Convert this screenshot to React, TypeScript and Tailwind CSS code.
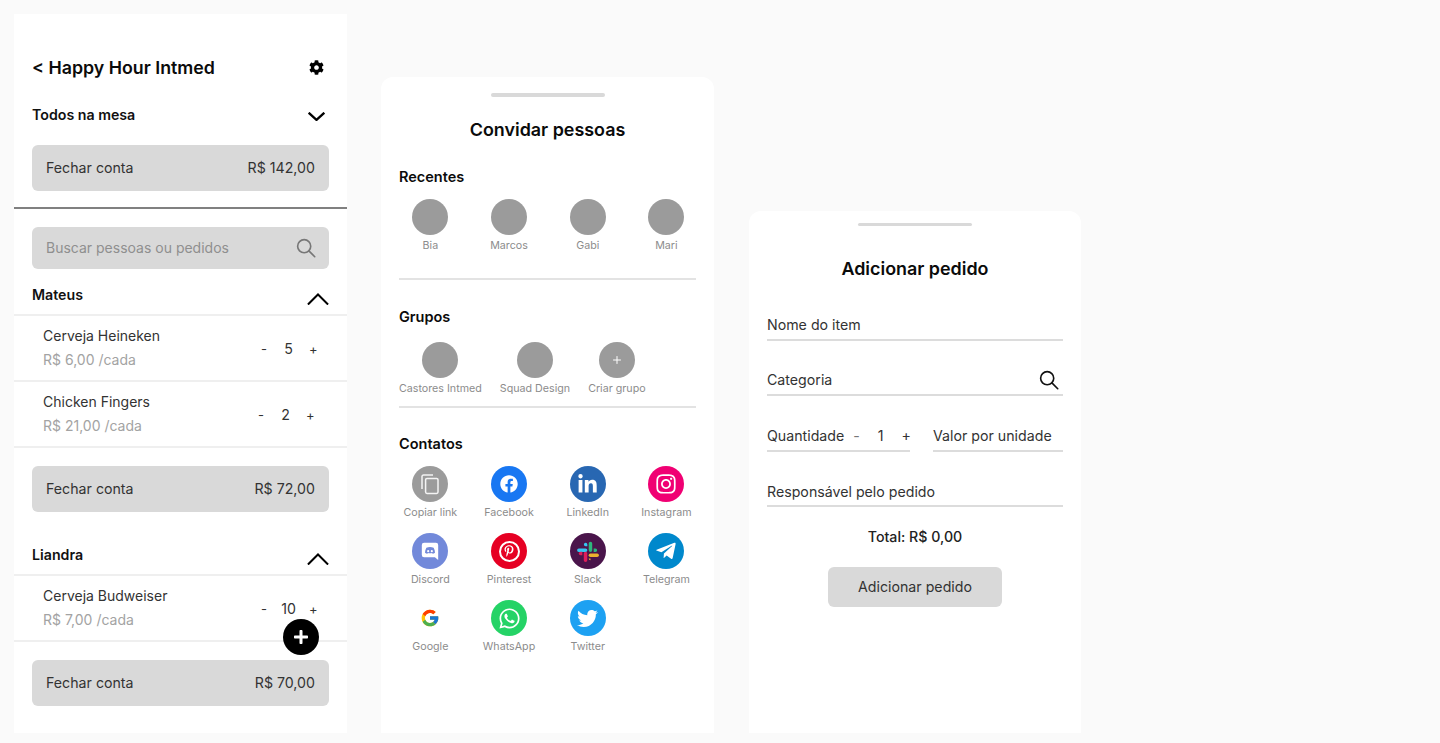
import { ReactNode } from 'react';
import {
  FaFacebook,
  FaLinkedinIn,
  FaInstagram,
  FaPinterestP,
  FaTelegramPlane,
  FaWhatsapp,
  FaTwitter,
  FaPlus,
  FaCog,
} from 'react-icons/fa';
import { FcGoogle } from 'react-icons/fc';
import { Plus } from 'lucide-react';

function SearchIcon({ className }: { className: string }) {
  return (
    <svg viewBox="0 0 22 22" fill="none" stroke="currentColor" strokeWidth="1.8" strokeLinecap="round" className={className}>
      <circle cx="9" cy="9" r="7.2" />
      <path d="M14.2 14.2 20.6 20.6" />
    </svg>
  );
}

function Chevron({ up, wide }: { up?: boolean; wide?: boolean }) {
  return (
    <svg
      viewBox="0 0 24 12"
      fill="none"
      stroke="black"
      strokeWidth={wide ? 2.2 : 3.2}
      className={wide ? 'w-[22px] h-[12px]' : 'w-[17px] h-[9px]'}
      preserveAspectRatio="none"
    >
      <path d={up ? 'M1 11.5 12 1.5 23 11.5' : 'M1 1 12 10.5 23 1'} />
    </svg>
  );
}

function CloseBill({ value, className }: { value: string; className: string }) {
  return (
    <div className={`mx-[18px] h-[46px] rounded-[6px] bg-[#d9d9d9] px-[14px] flex items-center justify-between text-[14.2px] text-[#333] ${className}`}>
      <span>Fechar conta</span>
      <span>{value}</span>
    </div>
  );
}

function Item({ name, price, qty, shift }: { name: string; price: string; qty: string; shift?: boolean }) {
  return (
    <div className="h-[66px] border-b-2 border-[#efefef] pl-[29px] flex items-center justify-between">
      <div className="flex flex-col gap-[3px] mb-[2px]">
        <span className="text-[14px] leading-[21px] text-[#333]">{name}</span>
        <span className="text-[14px] leading-[21px] text-[#a3a3a3]">{price}</span>
      </div>
      <div className={`mt-[2px] grid grid-cols-[8px_1fr_8px] w-[57px] text-center text-[#333] ${shift ? 'mr-[33px]' : 'mr-[30px]'}`}>
        <span className="text-[13px] leading-[20px]">-</span>
        <span className="text-[14.2px] leading-[20px]">{qty}</span>
        <span className="text-[13px] leading-[20px]">+</span>
      </div>
    </div>
  );
}

function PersonHeader({ name, className }: { name: string; className?: string }) {
  return (
    <div className={`h-[31px] border-b-2 border-[#efefef] pl-[18px] pr-[18px] flex items-start justify-between ${className ?? ''}`}>
      <span className="text-[14.2px] leading-[20px] font-semibold text-[#111]">{name}</span>
      <span className="mt-[8px] block h-[12px]"><Chevron up wide /></span>
    </div>
  );
}

function TablePanel() {
  return (
    <section className="relative w-[333px] h-[719px] bg-white pt-[42px]">
      <div className="h-[24px] pl-[18px] pr-[23px] flex items-center justify-between">
        <h1 className="text-[17.8px] font-semibold text-[#0b0b0b]">&lt; Happy Hour Intmed</h1>
        <FaCog className="w-[15px] h-[15px] text-black -mt-[2px]" />
      </div>
      <div className="mt-[23px] h-[24px] pl-[18px] pr-[22px] flex items-center justify-between">
        <span className="text-[14.2px] font-semibold text-[#111]">Todos na mesa</span>
        <span className="mt-[3px]"><Chevron /></span>
      </div>
      <CloseBill value="R$ 142,00" className="mt-[18px]" />
      <div className="mt-[16px] h-[2px] bg-[#808080]" />
      <div className="mt-[18px] mx-[18px] h-[42px] rounded-[6px] bg-[#d9d9d9] pl-[14px] pr-[13px] pb-[1px] flex items-center justify-between text-[14px] text-[#8f8f8f]">
        <span>Buscar pessoas ou pedidos</span>
        <SearchIcon className="w-[20px] h-[20px] text-[#777]" />
      </div>
      <PersonHeader name="Mateus" className="mt-[16px]" />
      <Item name="Cerveja Heineken" price="R$ 6,00 /cada" qty="5" />
      <Item name="Chicken Fingers" price="R$ 21,00 /cada" qty="2" shift />
      <CloseBill value="R$ 72,00" className="mt-[18px]" />
      <PersonHeader name="Liandra" className="mt-[33px]" />
      <Item name="Cerveja Budweiser" price="R$ 7,00 /cada" qty="10" />
      <CloseBill value="R$ 70,00" className="mt-[18px]" />
      <button className="absolute left-[269px] top-[605px] w-[36px] h-[36px] rounded-full bg-black flex items-center justify-center">
        <FaPlus className="w-[16px] h-[16px] text-white" />
      </button>
    </section>
  );
}

function Handle({ className }: { className: string }) {
  return <div className={`mx-auto w-[114px] rounded-full bg-[#d9d9d9] ${className}`} />;
}

function Person({ label, color = 'bg-[#9b9b9b]', children }: { label: string; color?: string; children?: ReactNode }) {
  return (
    <div className="flex flex-col items-center">
      <div className={`w-[36px] h-[36px] rounded-full flex items-center justify-center ${color}`}>{children}</div>
      <span className="mt-[3px] text-[10.7px] leading-[16px] text-[#8c8c8c] whitespace-nowrap">{label}</span>
    </div>
  );
}

function SlackMark() {
  return (
    <svg viewBox="0 0 24 24" className="w-[22px] h-[22px]">
      <path fill="#36c5f0" d="M2 9.4h7.4a1.9 1.9 0 0 1 0 3.8H2a1.9 1.9 0 0 1 0-3.8z" />
      <path fill="#36c5f0" d="M9.4 2a1.9 1.9 0 0 1 1.9 1.9v1.9H9.4a1.9 1.9 0 0 1 0-3.8z" transform="translate(0 1)" />
      <path fill="#2eb67d" d="M14.7 2a1.9 1.9 0 0 1 1.9 1.9v7.4a1.9 1.9 0 0 1-3.8 0V3.9A1.9 1.9 0 0 1 14.7 2z" />
      <path fill="#2eb67d" d="M18.2 9.4h1.9a1.9 1.9 0 0 1 0 3.8h-1.9z" />
      <path fill="#ecb22e" d="M14.6 14.8H22a1.9 1.9 0 0 1 0 3.8h-7.4a1.9 1.9 0 0 1 0-3.8z" />
      <path fill="#ecb22e" d="M12.8 20.2h1.9v1.9a1.9 1.9 0 0 1-1.9-1.9z" />
      <path fill="#e01e5a" d="M9.3 12.8a1.9 1.9 0 0 1 1.9 1.9v7.4a1.9 1.9 0 0 1-3.8 0v-7.4a1.9 1.9 0 0 1 1.9-1.9z" />
      <path fill="#e01e5a" d="M5.8 14.8v1.9H3.9a1.9 1.9 0 0 1 0-3.8h1.9z" />
    </svg>
  );
}

function CopyMark() {
  return (
    <svg viewBox="0 0 22 22" fill="none" stroke="#f4f4f4" strokeWidth="1.5" className="w-[22px] h-[22px]">
      <path d="M3 16V3.6C3 2.7 3.7 2 4.6 2H14" />
      <rect x="6.6" y="5.4" width="12.4" height="15" rx="1.4" />
    </svg>
  );
}

function DiscordMark() {
  return (
    <svg viewBox="0 0 22 22" className="w-[20px] h-[20px]">
      <path fill="white" d="M4.5 2h13A2.5 2.5 0 0 1 20 4.500V21l-3.600-3.200H4.500A2.500 2.500 0 0 1 2 15.300V4.500A2.500 2.500 0 0 1 4.500 2z" />
      <path fill="#7289da" d="M7 7.400c2.600-1.100 5.400-1.100 8 0 1 1.700 1.500 3.500 1.500 5.400-.9.700-1.700 1.100-2.600 1.300l-.6-.9c-1.500.4-3 .4-4.600 0l-.6.900c-.9-.2-1.700-.6-2.600-1.300 0-1.900.5-3.700 1.500-5.400z" />
      <circle cx="9" cy="11.200" r="1.200" fill="white" />
      <circle cx="13" cy="11.200" r="1.200" fill="white" />
    </svg>
  );
}

function PinterestMark() {
  return (
    <div className="w-[21px] h-[21px] rounded-full border-2 border-white flex items-center justify-center">
      <FaPinterestP className="w-[12px] h-[12px] text-white" />
    </div>
  );
}

const contacts: { label: string; color: string; icon: ReactNode }[] = [
  { label: 'Copiar link', color: 'bg-[#9b9b9b]', icon: <CopyMark /> },
  { label: 'Facebook', color: 'bg-[#1877f2]', icon: <FaFacebook className="w-[18px] h-[18px] text-white" /> },
  { label: 'LinkedIn', color: 'bg-[#2867b2]', icon: <FaLinkedinIn className="w-[21px] h-[21px] text-white" /> },
  { label: 'Instagram', color: 'bg-[#f00073]', icon: <FaInstagram className="w-[22px] h-[22px] text-white" /> },
  { label: 'Discord', color: 'bg-[#7289da]', icon: <DiscordMark /> },
  { label: 'Pinterest', color: 'bg-[#e60023]', icon: <PinterestMark /> },
  { label: 'Slack', color: 'bg-[#4a154b]', icon: <SlackMark /> },
  { label: 'Telegram', color: 'bg-[#0088cc]', icon: <FaTelegramPlane className="w-[22px] h-[22px] text-white" /> },
  { label: 'Google', color: 'bg-white', icon: <FcGoogle className="w-[20px] h-[20px]" /> },
  { label: 'WhatsApp', color: 'bg-[#25d366]', icon: <FaWhatsapp className="w-[23px] h-[23px] text-white" /> },
  { label: 'Twitter', color: 'bg-[#1da1f2]', icon: <FaTwitter className="w-[21px] h-[21px] text-white" /> },
];

function InvitePanel() {
  return (
    <section className="w-[333px] h-[656px] bg-white rounded-t-[12px] pt-[16px]">
      <Handle className="h-[4px]" />
      <h2 className="mt-[19px] text-center text-[17.9px] leading-[28px] font-semibold text-[#0b0b0b]">Convidar pessoas</h2>
      <div className="px-[18px]">
        <h3 className="mt-[23px] text-[14.5px] leading-[20px] font-semibold text-[#0b0b0b]">Recentes</h3>
        <div className="mt-[12px] grid grid-cols-[repeat(4,78.7px)] -mx-[8px] pb-[24px]">
          <Person label="Bia" />
          <Person label="Marcos" />
          <Person label="Gabi" />
          <Person label="Mari" />
        </div>
        <div className="h-[2px] bg-[#e3e3e3]" />
        <h3 className="mt-[27px] text-[14.5px] leading-[20px] font-semibold text-[#0b0b0b]">Grupos</h3>
        <div className="mt-[15px] flex gap-[18px] pb-[9px]">
          <Person label="Castores Intmed" />
          <Person label="Squad Design" />
          <Person label="Criar grupo">
            <Plus className="w-[12px] h-[12px] text-white" />
          </Person>
        </div>
        <div className="h-[2px] bg-[#e3e3e3]" />
        <h3 className="mt-[26px] text-[14.5px] leading-[20px] font-semibold text-[#0b0b0b]">Contatos</h3>
        <div className="mt-[12px] grid grid-cols-[repeat(4,78.7px)] -mx-[8px] gap-y-[12px]">
          {contacts.map((c) => (
            <Person key={c.label} label={c.label} color={c.color}>
              {c.icon}
            </Person>
          ))}
        </div>
      </div>
    </section>
  );
}

function Field({ className, children }: { className?: string; children: ReactNode }) {
  return (
    <div className={`h-[25.5px] border-b-2 border-[#dcdcdc] flex items-start justify-between text-[14.2px] leading-[20px] text-[#333] ${className ?? ''}`}>
      {children}
    </div>
  );
}

function OrderPanel() {
  return (
    <section className="ml-[1px] w-[332px] h-[522px] bg-white rounded-t-[12px] pt-[12px]">
      <Handle className="h-[3px]" />
      <h2 className="mt-[29px] text-center text-[17.9px] leading-[28px] font-semibold text-[#0b0b0b]">Adicionar pedido</h2>
      <div className="mt-[32px] px-[18px]">
        <Field>Nome do item</Field>
        <Field className="mt-[29.5px]">
          <span>Categoria</span>
          <SearchIcon className="w-[20px] h-[20px] text-[#111] mr-[4px]" />
        </Field>
        <div className="mt-[30.5px] flex justify-between">
          <Field className="w-[143px]">
            <span>Quantidade</span>
            <span className="text-[#777] ml-[9px]">-</span>
            <span className="ml-[18px]">1</span>
            <span className="ml-[18px]">+</span>
          </Field>
          <Field className="w-[130px]">Valor por unidade</Field>
        </div>
        <Field className="mt-[30px]">Responsável pelo pedido</Field>
      </div>
      <p className="mt-[19.5px] text-center text-[14.2px] leading-[20px] font-medium text-[#222]">Total: R$ 0,00</p>
      <button className="mt-[20.5px] mx-auto block w-[174px] h-[40px] rounded-[6px] bg-[#d9d9d9] text-[14.2px] text-[#333]">
        Adicionar pedido
      </button>
    </section>
  );
}

export default function App() {
  return (
    <main className="w-[1440px] h-[743px] overflow-hidden bg-[#fafafa] font-['Inter',sans-serif] pl-[14px] pt-[14px]">
      <div className="flex items-end gap-[34px] h-[719px]">
        <TablePanel />
        <InvitePanel />
        <OrderPanel />
      </div>
    </main>
  );
}
